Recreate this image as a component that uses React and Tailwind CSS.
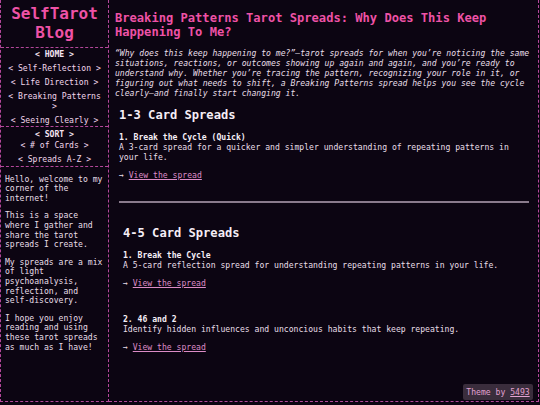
import React from "react";

const mono = { fontFamily: '"DejaVu Sans Mono", "Liberation Mono", monospace' };

function NavItem({ children, bold }) {
  return (
    <div className={`leading-[10px] text-center ${bold ? "font-bold text-[#f6e4f2]" : "text-[#f1d6ec]"}`}>
      {children}
    </div>
  );
}

function Item({ title, desc }) {
  return (
    <div>
      <div className="font-bold text-[8.1px] leading-[10px] text-[#f6eef6]">{title}</div>
      <div className="text-[8.1px] leading-[10px] text-[#e8dfe8]">{desc}</div>
      <div className="mt-[7.5px] text-[8.1px] leading-[10px] text-[#e8dfe8]">
        → <span className="underline text-[#dc8cc6] decoration-[#dc8cc6]">View the spread</span>
      </div>
    </div>
  );
}

export default function App() {
  return (
    <div className="w-[540px] h-[405px] bg-[#0c0512] relative overflow-hidden" style={mono}>
      <div className="flex w-[539px] h-[402px]">
        {/* Sidebar */}
        <aside className="w-[109px] shrink-0 flex flex-col border-l border-r border-b border-dashed border-[#b3479a] text-[8.1px]">
          <div className="pt-[4px] pb-[4px] border-b border-dashed border-[#b3479a] text-center text-[16px] leading-[19.3px] font-bold text-[#ee52a6]">
            SelfTarot
            <br />
            Blog
          </div>
          <div className="pt-[1px] pb-[1px] px-[4px] flex flex-col gap-[4px] border-b border-dashed border-[#b3479a]">
            <NavItem bold>&lt; HOME &gt;</NavItem>
            <NavItem>&lt; Self-Reflection &gt;</NavItem>
            <NavItem>&lt; Life Direction &gt;</NavItem>
            <NavItem>&lt; Breaking Patterns &gt;</NavItem>
            <NavItem>&lt; Seeing Clearly &gt;</NavItem>
          </div>
          <div className="pt-[2px] pb-[2px] px-[4px] flex flex-col border-b border-dashed border-[#b3479a]">
            <NavItem bold>&lt; SORT &gt;</NavItem>
            <div className="mt-[1px]">
              <NavItem>&lt; # of Cards &gt;</NavItem>
            </div>
            <div className="mt-[4px]">
              <NavItem>&lt; Spreads A-Z &gt;</NavItem>
            </div>
          </div>
          <div className="pt-[8px] px-[4px] text-[8.1px] leading-[9.6px] text-[#e8dfe8] flex flex-col gap-[8px]">
            <p>Hello, welcome to my corner of the internet!</p>
            <p>This is a space where I gather and share the tarot spreads I create.</p>
            <p>My spreads are a mix of light psychoanalysis, reflection, and self-discovery.</p>
            <p>I hope you enjoy reading and using these tarot spreads as much as I have!</p>
          </div>
        </aside>

        {/* Main */}
        <main className="flex-1 border-r border-b border-dashed border-[#b3479a] pl-[6px] pr-[3px] pt-[11px]">
          <h1 className="text-[12.1px] leading-[14.4px] font-bold text-[#ee52a6]">
            Breaking Patterns Tarot Spreads: Why Does This Keep Happening To Me?
          </h1>
          <p className="mt-[9.5px] text-[8.1px] leading-[9.8px] italic text-[#e8dfe8]">
            “Why does this keep happening to me?”—tarot spreads for when you’re noticing the same
            situations, reactions, or outcomes showing up again and again, and you’re ready to
            understand why. Whether you’re tracing the pattern, recognizing your role in it, or
            figuring out what needs to shift, a Breaking Patterns spread helps you see the cycle
            clearly—and finally start changing it.
          </p>

          <section className="pl-[4px] pr-[14px]">
            <h2 className="mt-[9.5px] text-[12.1px] leading-[14.4px] font-bold text-[#f6eef6]">1-3 Card Spreads</h2>
            <div className="mt-[10px]">
              <Item
                title="1. Break the Cycle (Quick)"
                desc="A 3-card spread for a quicker and simpler understanding of repeating patterns in your life."
              />
            </div>
          </section>

          <div className="ml-[4px] mt-[21px] w-[410px] h-[2px] bg-[#8a7b8c]" />

          <section className="pl-[8px] pr-[10px]">
            <h2 className="mt-[23.5px] text-[12.1px] leading-[14.4px] font-bold text-[#f6eef6]">4-5 Card Spreads</h2>
            <div className="mt-[9.4px]">
              <Item
                title="1. Break the Cycle"
                desc="A 5-card reflection spread for understanding repeating patterns in your life."
              />
            </div>
            <div className="mt-[26.6px]">
              <Item
                title="2. 46 and 2"
                desc="Identify hidden influences and unconcious habits that keep repeating."
              />
            </div>
          </section>
        </main>
      </div>

      <div className="absolute left-[463px] top-[384px] w-[70px] h-[16px] rounded-[2px] bg-[#3a2d3c] flex items-center justify-center text-[8.1px] text-[#e3a2d2]">
        Theme by&nbsp;<span className="underline">5493</span>
      </div>
    </div>
  );
}
